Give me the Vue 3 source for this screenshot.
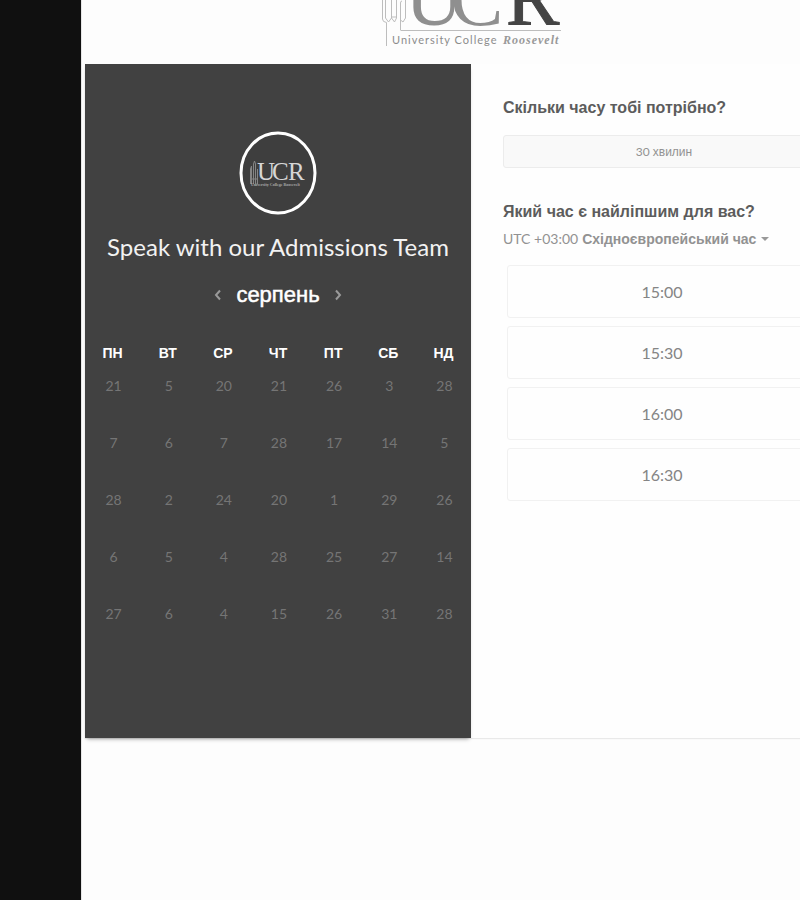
<script setup>
import { ref } from 'vue'

const weekdays = ['ПН', 'ВТ', 'СР', 'ЧТ', 'ПТ', 'СБ', 'НД']
const weeks = [
  [21, 5, 20, 21, 26, 3, 28],
  [7, 6, 7, 28, 17, 14, 5],
  [28, 2, 24, 20, 1, 29, 26],
  [6, 5, 4, 28, 25, 27, 14],
  [27, 6, 4, 15, 26, 31, 28],
]
const times = ['15:00', '15:30', '16:00', '16:30']
const zone = ref('eet')
const selected = ref('')
</script>

<template>
  <div class="page">
    <aside class="rail"></aside>
    <main class="content">
      <header class="brand">
        <svg class="brand-logo" viewBox="0 0 190 52" role="img" aria-label="University College Roosevelt">
          <g fill="none" stroke="#bdbdbd" stroke-width="1">
            <path d="M6.500 0V19Q6.500 22 10.500 22.500V46" />
            <path d="M9.500 0V18L12.500 22L15.500 18V0M15.500 17H20.500M20.500 0V18L18.500 22L15.500 18" />
            <path d="M24.500 30V3Q24.500 1 26 1M24.500 20L27 22L29.500 18V0" />
            <path d="M24.500 30.500H185" />
          </g>
          <g class="brand-letters">
            <text x="29" y="25" fill="#8f8f8f">U</text>
            <text x="74" y="25" fill="#8f8f8f">C</text>
            <text x="130" y="25" fill="#444" stroke="#444">R</text>
          </g>
          <text class="brand-name" x="16" y="44">University College</text>
          <text class="brand-roosevelt" x="127" y="44">Roosevelt</text>
        </svg>
      </header>

      <div class="card">
        <section class="calendar">
          <svg class="avatar" viewBox="0 0 78 84" role="img" aria-label="UCR">
            <ellipse cx="39" cy="42" rx="37" ry="40" fill="#3e3e3e" stroke="#fff" stroke-width="3" />
            <g fill="none" stroke="#858585" stroke-width="1">
              <path d="M11.500 53V38L12.500 35V53M14.500 53V33L15.500 30L16.500 33V53M18.500 53V38" />
              <path d="M11 48H19" />
            </g>
            <g class="avatar-letters">
              <text x="18" y="49">U</text>
              <text x="33" y="49">C</text>
              <text x="49" y="49">R</text>
            </g>
            <text class="avatar-name" x="12" y="55">University College Roosevelt</text>
          </svg>
          <h1 class="title">Speak with our Admissions Team</h1>
          <div class="month">
            <button type="button" class="arrow" aria-label="Попередній місяць">
              <svg viewBox="0 0 8 12"><path d="M6 1.500L2 6L6 10.500" /></svg>
            </button>
            <h2 class="month-name">серпень</h2>
            <button type="button" class="arrow" aria-label="Наступний місяць">
              <svg viewBox="0 0 8 12"><path d="M2 1.500L6 6L2 10.500" /></svg>
            </button>
          </div>
          <table class="days">
            <thead>
              <tr><th v-for="d in weekdays" :key="d" scope="col">{{ d }}</th></tr>
            </thead>
            <tbody>
              <tr v-for="(week, w) in weeks" :key="w">
                <td v-for="(day, i) in week" :key="i">
                  <button type="button" class="day" disabled>{{ day }}</button>
                </td>
              </tr>
            </tbody>
          </table>
        </section>

        <section class="options">
          <h2 class="question">Скільки часу тобі потрібно?</h2>
          <button type="button" class="duration">30 <span class="unit">хвилин</span></button>
          <h2 class="question second">Який час є найліпшим для вас?</h2>
          <div class="zone">
            <label for="zone">UTC +03:00</label>
            <select id="zone" v-model="zone">
              <option value="eet">Східноєвропейський час</option>
            </select>
            <svg class="caret" viewBox="0 0 8 4"><path d="M0 0H8L4 4Z" /></svg>
          </div>
          <div class="slots">
            <button
              v-for="t in times"
              :key="t"
              type="button"
              class="slot"
              :aria-pressed="selected === t"
              @click="selected = t"
            >{{ t }}</button>
          </div>
        </section>
      </div>
    </main>
  </div>
</template>

<style>
body {
  margin: 0;
  background: #fdfdfd;
}
</style>

<style scoped>
.page {
  display: flex;
  min-height: 100vh;
  overflow: hidden;
  font-family: "Liberation Sans", sans-serif;
}
button {
  padding: 0;
  border: 0;
  background: none;
  font: inherit;
  color: inherit;
}
h1, h2 {
  margin: 0;
}
.rail {
  flex: 0 0 81px;
  background: #101010;
}
.content {
  flex: 1;
  min-width: 0;
  margin-right: -57px;
  padding-left: 3px;
  border-left: 1px solid #e6e6e6;
  box-sizing: border-box;
  background: #fdfdfd;
}
.brand {
  display: flex;
  justify-content: center;
  height: 64px;
}
.brand-logo {
  width: 190px;
  height: 52px;
}
.brand-letters {
  font: 80px "Liberation Serif", serif;
}
.brand-name {
  font: 11px Lato, sans-serif;
  letter-spacing: 1px;
  fill: #8c8c8c;
}
.brand-roosevelt {
  font: italic bold 12px "Liberation Serif", serif;
  letter-spacing: 1px;
  fill: #999;
}
.card {
  display: grid;
  grid-template-columns: repeat(2, minmax(0, 1fr));
  min-height: 674px;
  background: #fefefe;
  box-shadow: 0 1px 1px rgba(0, 0, 0, 0.08);
}
.calendar {
  display: flex;
  flex-direction: column;
  align-items: center;
  padding-top: 67px;
  background: #414141;
  box-shadow: 0 3px 4px -2px rgba(0, 0, 0, 0.35);
  color: #fff;
}
.avatar {
  width: 78px;
  height: 84px;
}
.avatar-letters {
  font: 25px "Liberation Serif", serif;
  fill: #d6d6d6;
}
.avatar-name {
  font: bold 4px "Liberation Serif", serif;
  fill: #aaa;
}
.title {
  margin-top: 16px;
  font: 24px/32px Lato, sans-serif;
  white-space: nowrap;
  color: #f2f2f2;
}
.month {
  display: flex;
  align-items: center;
  gap: 14px;
  margin-top: 16px;
}
.month-name {
  font-size: 22px;
  line-height: 32px;
  font-weight: 400;
  -webkit-text-stroke: 0.5px #fff;
}
.arrow {
  display: flex;
}
.arrow svg {
  width: 8px;
  height: 12px;
  fill: none;
  stroke: #999;
  stroke-width: 2;
}
.days {
  width: 100%;
  margin-top: 31px;
  table-layout: fixed;
  border-collapse: collapse;
}
.days th {
  padding: 0;
  font-size: 14px;
  line-height: 22px;
  font-weight: 700;
}
.days td {
  padding: 12px 0 25px 2px;
  text-align: center;
  font-size: 0;
}
.day {
  font: 14px/20px Lato, sans-serif;
  color: #757575;
}
.options {
  padding: 32px 32px 0;
}
.question {
  font-size: 16px;
  line-height: 24px;
  font-weight: 700;
  color: #5c5c5c;
}
.duration {
  width: 100%;
  height: 33px;
  margin-top: 15px;
  border: 1px solid #ececec;
  border-radius: 3px;
  background: #f9f9f9;
  font: 12px/20px Lato, sans-serif;
  color: #929292;
}
.unit {
  font-family: "Liberation Sans", sans-serif;
}
.second {
  margin-top: 32px;
}
.zone {
  display: flex;
  align-items: center;
  gap: 4px;
  margin-top: 5px;
  font: 14px/20px Lato, sans-serif;
  color: #929292;
}
.zone select {
  appearance: none;
  padding: 0;
  border: 0;
  background: none;
  font: bold 14px/20px "Liberation Sans", sans-serif;
  color: #929292;
}
.caret {
  width: 8px;
  height: 4px;
  fill: #999;
}
.slots {
  display: grid;
  gap: 8px;
  margin-top: 16px;
  padding: 0 8px 0 4px;
}
.slot {
  height: 53px;
  border: 1px solid #f1f1f1;
  border-radius: 3px;
  font: 16px/20px Lato, sans-serif;
  color: #858585;
}
</style>
